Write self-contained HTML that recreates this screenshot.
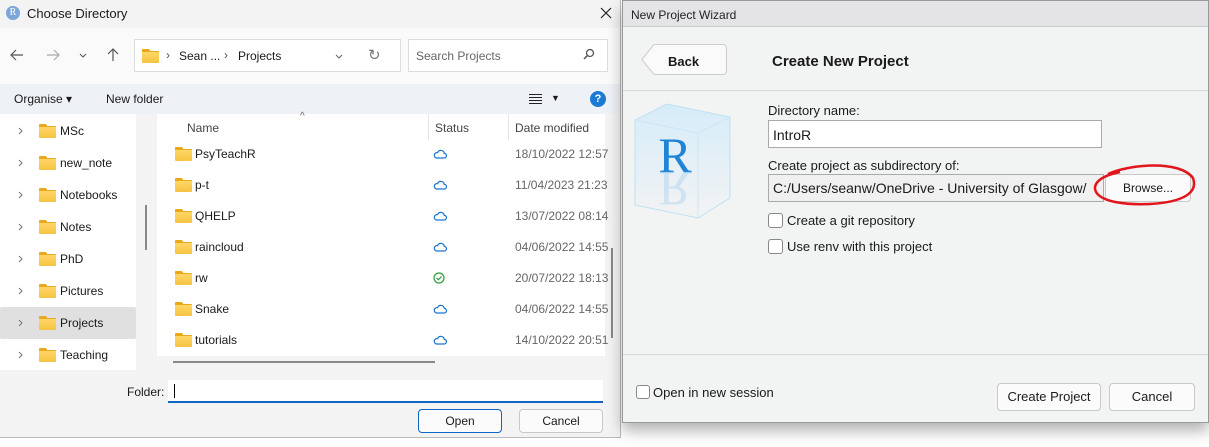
<!DOCTYPE html>
<html><head><meta charset="utf-8"><style>
*{box-sizing:border-box;margin:0;padding:0}
body{width:1209px;height:447px;overflow:hidden;background:#fff;font-family:"Liberation Sans",sans-serif;font-size:12px;color:#1a1a1a;position:relative}
.a{position:absolute;white-space:nowrap}
.fold{position:absolute;width:17px;height:13px}
.fold:before{content:"";position:absolute;left:0;top:0;width:8px;height:4px;background:#e8a817;border-radius:1px 2px 0 0}
.fold:after{content:"";position:absolute;left:0;top:2px;width:17px;height:11px;background:linear-gradient(#ffd766,#f6c342);border-radius:1px;border-top:1px solid #e8a817}
.btn{position:absolute;border:1px solid #c8c8c8;border-radius:4px;background:#fbfbfb;text-align:center;font-size:13px}
.cb{position:absolute;width:15px;height:15px;border:1px solid #888;border-radius:3px;background:#fff}
</style></head><body>
<div class="a" style="left:0;top:0;width:621px;height:438px;background:#f3f3f3;border-right:1px solid #bbb;border-bottom:1px solid #bbb"></div>
<div class="a" style="left:6px;top:6px;width:14px;height:14px;border-radius:50%;background:#7ba7d8;color:#fff;font-size:10px;text-align:center;line-height:14px;font-family:'Liberation Serif',serif">R</div>
<div class="a" style="left:27px;top:6px;font-size:13px">Choose Directory</div>
<svg class="a" style="left:600px;top:7px" width="12" height="12"><path d="M1 1L11 11M11 1L1 11" stroke="#222" stroke-width="1.2"/></svg>
<div class="a" style="left:0;top:28px;width:620px;height:56px;background:#fafafa"></div>
<svg class="a" style="left:10px;top:49px" width="14" height="12"><path d="M13 6H1M6 1L1 6L6 11" fill="none" stroke="#555" stroke-width="1.2"/></svg>
<svg class="a" style="left:46px;top:49px" width="14" height="12"><path d="M1 6H13M8 1L13 6L8 11" fill="none" stroke="#aaa" stroke-width="1.2"/></svg>
<svg class="a" style="left:79px;top:53px" width="8" height="5"><path d="M1 1L4 4L7 1" fill="none" stroke="#555"/></svg>
<svg class="a" style="left:107px;top:48px" width="12" height="14"><path d="M6 13V1M1 6L6 1L11 6" fill="none" stroke="#555" stroke-width="1.2"/></svg>
<div class="a" style="left:134px;top:39px;width:267px;height:33px;border:1px solid #ddd;background:#fff"></div>
<div class="fold" style="left:142px;top:49px"></div>
<div class="a" style="left:166px;top:48px;font-size:12px;color:#555">›</div>
<div class="a" style="left:179px;top:49px;font-size:12px">Sean ...</div>
<div class="a" style="left:224px;top:48px;font-size:12px;color:#555">›</div>
<div class="a" style="left:238px;top:49px;font-size:12px">Projects</div>
<svg class="a" style="left:335px;top:54px" width="8" height="5"><path d="M1 1L4 4L7 1" fill="none" stroke="#666"/></svg>
<div class="a" style="left:368px;top:46px;font-size:15px;color:#777">↻</div>
<div class="a" style="left:408px;top:39px;width:200px;height:33px;border:1px solid #ddd;background:#fff"></div>
<div class="a" style="left:416px;top:49px;font-size:12px;color:#666">Search Projects</div>
<svg class="a" style="left:583px;top:48px" width="12" height="12"><circle cx="7" cy="5" r="3.5" fill="none" stroke="#555" stroke-width="1.3"/><path d="M4.5 7.5L1 11" stroke="#555" stroke-width="1.5"/></svg>
<div class="a" style="left:0;top:84px;width:620px;height:30px;background:#eef1f5"></div>
<div class="a" style="left:14px;top:92px;font-size:12px">Organise ▾</div>
<div class="a" style="left:106px;top:92px;font-size:12px">New folder</div>
<svg class="a" style="left:529px;top:94px" width="13" height="10"><path d="M0 .5H13M0 3.5H13M0 6.5H13M0 9.5H13" stroke="#222"/></svg>
<div class="a" style="left:551px;top:93px;font-size:9px">▼</div>
<div class="a" style="left:590px;top:91px;width:16px;height:16px;border-radius:50%;background:#1a7ad4;color:#fff;font-size:11px;font-weight:bold;text-align:center;line-height:16px">?</div>
<div class="a" style="left:0;top:114px;width:136px;height:256px;background:#fff"></div>
<div class="a" style="left:0;top:307px;width:136px;height:32px;background:#e0e0e0;border-radius:2px"></div>
<div class="a" style="left:136px;top:114px;width:21px;height:256px;background:#f3f3f3"></div>
<div class="a" style="left:145px;top:205px;width:2px;height:45px;background:#888"></div>
<div id="side"></div>
<div class="a" style="left:157px;top:114px;width:448px;height:242px;background:#fff"></div>
<div class="a" style="left:300px;top:111px;font-size:10px;color:#666">^</div>
<div class="a" style="left:187px;top:121px;font-size:12px;color:#444">Name</div>
<div class="a" style="left:428px;top:114px;width:1px;height:26px;background:#e5e5e5"></div>
<div class="a" style="left:435px;top:121px;font-size:12px;color:#444">Status</div>
<div class="a" style="left:508px;top:114px;width:1px;height:26px;background:#e5e5e5"></div>
<div class="a" style="left:515px;top:121px;font-size:12px;color:#444">Date modified</div>
<div class="a" style="left:611px;top:248px;width:2px;height:90px;background:#888"></div>
<div class="a" style="left:173px;top:361px;width:262px;height:2px;background:#888"></div>
<div id="files"></div>
<div class="a" style="left:127px;top:385px;font-size:12px">Folder:</div>
<div class="a" style="left:168px;top:380px;width:435px;height:23px;background:#fff;border-bottom:2px solid #0f66c3"></div>
<div class="a" style="left:174px;top:384px;width:1px;height:14px;background:#000"></div>
<div class="btn" style="left:418px;top:409px;width:84px;height:24px;line-height:22px;border-color:#0f66c3;font-size:12px">Open</div>
<div class="btn" style="left:519px;top:409px;width:84px;height:24px;line-height:22px;font-size:12px">Cancel</div>
<div class="a" style="left:622px;top:0;width:587px;height:423px;background:#f2f3f3;border:1px solid #999;box-shadow:0 8px 14px rgba(0,0,0,.3)"></div>
<div class="a" style="left:623px;top:1px;width:585px;height:26px;background:#e4e4e6;border-bottom:1px solid #ccc"></div>
<div class="a" style="left:631px;top:8px;font-size:12px;color:#222">New Project Wizard</div>
<svg class="a" style="left:641px;top:44px" width="86" height="31"><path d="M13 .5H82a3.5 3.5 0 0 1 3.5 3.5V27a3.5 3.5 0 0 1-3.5 3.5H13L.8 15.5Z" fill="#fafafa" stroke="#ccc"/></svg>
<div class="a" style="left:668px;top:54px;font-size:13px;font-weight:bold">Back</div>
<div class="a" style="left:772px;top:53px;font-size:15px;font-weight:bold">Create New Project</div>
<div class="a" style="left:623px;top:90px;width:585px;height:1px;background:#d8d8d8"></div>
<svg class="a" style="left:632px;top:100px" width="100" height="130">
<defs><linearGradient id="g" x1="0" y1="0" x2="0" y2="1"><stop offset="0" stop-color="#d6ecf9"/><stop offset="1" stop-color="#f2f3f3"/></linearGradient></defs>
<path d="M3 20 L35 4 L98 17 L98 98 L66 118 L3 105Z" fill="url(#g)" stroke="#bfe0f2"/>
<path d="M3 20 L66 33 L98 17 M66 33 V118" fill="none" stroke="#cbe6f5"/>
<text x="43" y="72" font-family="Liberation Serif,serif" font-size="50" fill="#1f84d6" text-anchor="middle">R</text>
<text x="43" y="74" font-family="Liberation Serif,serif" font-size="50" fill="#8ec3ea" opacity=".3" text-anchor="middle" transform="scale(1,-1) translate(0,-146)">R</text>
</svg>
<div class="a" style="left:768px;top:103px;font-size:13px">Directory name:</div>
<div class="a" style="left:768px;top:120px;width:334px;height:28px;background:#fff;border:1px solid #aaa"></div>
<div class="a" style="left:773px;top:127px;font-size:14px">IntroR</div>
<div class="a" style="left:768px;top:158px;font-size:13px">Create project as subdirectory of:</div>
<div class="a" style="left:768px;top:174px;width:336px;height:28px;background:#f0f0f0;border:1px solid #aaa;overflow:hidden"></div>
<div class="a" style="left:773px;top:180px;font-size:14px;width:328px;overflow:hidden">C:/Users/seanw/OneDrive - University of Glasgow/</div>
<div class="btn" style="left:1105px;top:174px;width:86px;height:28px;line-height:26px;font-size:12px">Browse...</div>
<svg class="a" style="left:1090px;top:162px" width="110" height="50"><path d="M18 12 C40 2 90 -2 103 16 C108 30 95 40 60 42 C35 43 12 40 6 30 C2 22 10 14 30 10" fill="none" stroke="#e3151c" stroke-width="2.5"/></svg>
<div class="cb" style="left:768px;top:213px"></div>
<div class="a" style="left:787px;top:213px;font-size:13px">Create a git repository</div>
<div class="cb" style="left:768px;top:239px"></div>
<div class="a" style="left:787px;top:239px;font-size:13px">Use renv with this project</div>
<div class="a" style="left:623px;top:354px;width:585px;height:1px;background:#d8d8d8"></div>
<div class="cb" style="left:636px;top:385px;width:14px;height:14px"></div>
<div class="a" style="left:653px;top:385px;font-size:13px">Open in new session</div>
<div class="btn" style="left:997px;top:383px;width:104px;height:28px;line-height:26px">Create Project</div>
<div class="btn" style="left:1109px;top:383px;width:86px;height:28px;line-height:26px">Cancel</div>
<script>
var s=["MSc","new_note","Notebooks","Notes","PhD","Pictures","Projects","Teaching"],h="";
s.forEach(function(n,i){var y=131+i*32;h+='<svg class="a" style="left:18px;top:'+(y-4)+'px" width="5" height="8"><path d="M1 1L4 4L1 7" fill="none" stroke="#777"/></svg><div class="fold" style="left:39px;top:'+(y-7)+'px"></div><div class="a" style="left:60px;top:'+(y-7)+'px;font-size:12px">'+n+'</div>';});
document.getElementById("side").innerHTML=h;
var f=[["PsyTeachR","18/10/2022 12:57"],["p-t","11/04/2023 21:23"],["QHELP","13/07/2022 08:14"],["raincloud","04/06/2022 14:55"],["rw","20/07/2022 18:13"],["Snake","04/06/2022 14:55"],["tutorials","14/10/2022 20:51"]];h="";
f.forEach(function(r,i){var y=154+i*31;var ic=r[0]=="rw"?'<svg class="a" style="left:433px;top:'+(y-6)+'px" width="12" height="12"><circle cx="6" cy="6" r="5" fill="none" stroke="#2a9d3a" stroke-width="1.2"/><path d="M3.5 6L5.3 7.8L8.5 4.5" fill="none" stroke="#2a9d3a" stroke-width="1.2"/></svg>':'<svg class="a" style="left:433px;top:'+(y-5)+'px" width="14" height="10"><path d="M3.5 9H11a2.3 2.3 0 0 0 .3-4.6A3.5 3.5 0 0 0 4.6 3.6 2.7 2.7 0 0 0 3.5 9Z" fill="none" stroke="#1a73d0" stroke-width="1.2"/></svg>';
h+='<div class="fold" style="left:175px;top:'+(y-7)+'px"></div><div class="a" style="left:195px;top:'+(y-7)+'px;font-size:12px">'+r[0]+'</div>'+ic+'<div class="a" style="left:515px;top:'+(y-7)+'px;font-size:12px;color:#666">'+r[1]+'</div>';});
document.getElementById("files").innerHTML=h;
</script>
</body></html>
